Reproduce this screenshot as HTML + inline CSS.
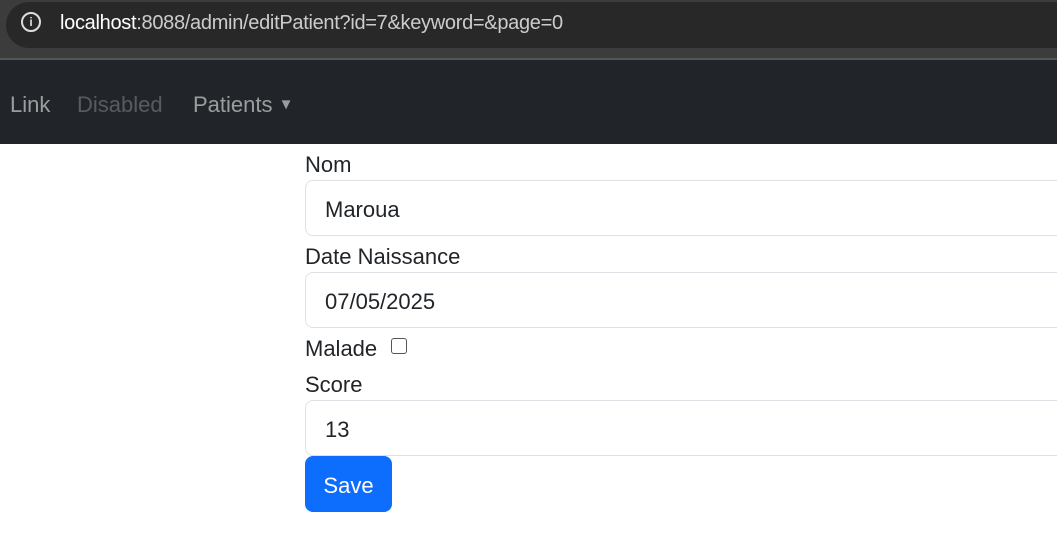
<!DOCTYPE html><html><head><style>
body{margin:0;width:1057px;height:551px;overflow:hidden;background:#fff;font-family:"Liberation Sans",sans-serif;color:#212529}
.top{position:absolute;left:0;top:0;width:1057px;height:60px;background:#3c3c3c}
.pill{position:absolute;left:6px;top:2px;width:1100px;height:46px;border-radius:23px;background:#282828}
.ic{position:absolute;left:21px;top:12px;width:20px;height:20px;border:2px solid #ddd;border-radius:50%;box-sizing:border-box;color:#ddd;font-size:12px;font-weight:bold;text-align:center;line-height:16px}
.url{position:absolute;left:60px;top:12px;font-size:20px;color:#ccc;letter-spacing:-0.3px}
.url b{font-weight:normal;color:#fff}
.line{position:absolute;left:0;top:58px;width:1057px;height:2px;background:#555}
.nav{position:absolute;left:0;top:60px;width:1057px;height:84px;background:#212529}
.nav span{position:absolute;top:32px;font-size:22px;color:rgba(255,255,255,.55)}
.lab{position:absolute;left:305px;font-size:22px}
.inp{position:absolute;left:305px;width:780px;height:54px;border:1px solid #dee2e6;border-radius:8px;font-size:22px;line-height:58px;padding-left:19px;box-sizing:content-box}
.cb{position:absolute;left:391px;top:338px;width:14px;height:14px;border:1.5px solid #555;border-radius:3px}
.btn{position:absolute;left:305px;top:456px;width:87px;height:56px;background:#0d6efd;border-radius:8px;color:#fff;font-size:22px;text-align:center;line-height:60px}
</style></head><body>
<div class="top"><div class="pill"></div><div class="ic">i</div><div class="url"><b>localhost</b>:8088/admin/editPatient?id=7&amp;keyword=&amp;page=0</div></div>
<div class="line"></div>
<div class="nav"><span style="left:10px">Link</span><span style="left:77px;color:rgba(255,255,255,.25)">Disabled</span><span style="left:193px">Patients <span style="position:static;font-size:15px;vertical-align:3px">▼</span></span></div>
<div class="lab" style="top:152px">Nom</div>
<div class="inp" style="top:180px">Maroua</div>
<div class="lab" style="top:244px">Date Naissance</div>
<div class="inp" style="top:272px">07/05/2025</div>
<div class="lab" style="top:336px">Malade</div><div class="cb"></div>
<div class="lab" style="top:372px">Score</div>
<div class="inp" style="top:400px">13</div>
<div class="btn">Save</div>
</body></html>
